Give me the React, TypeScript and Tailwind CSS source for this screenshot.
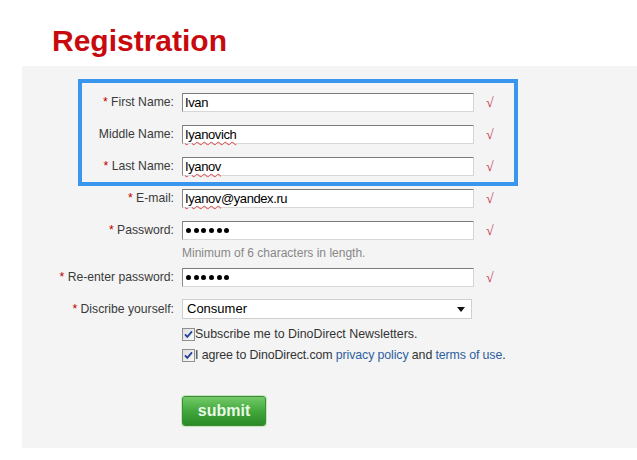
import React from "react";

const Check = () => (
  <span className="ml-[12px] text-[14px] leading-none text-[#c4374c]" style={{ fontFamily: '"Liberation Serif", "DejaVu Serif", serif' }}>
    √
  </span>
);

const Star = () => <span className="text-[#c00000]">*</span>;

const Field = ({ children }: { children?: React.ReactNode }) => (
  <div className="ml-[8px] flex h-[19px] w-[292px] items-center border border-t-[#7a7a7a] border-l-[#8a8a8a] border-r-[#d4d4d4] border-b-[#d8d8d8] bg-white pl-[2px] text-[13px] tracking-[-0.4px] text-black">
    {children}
  </div>
);

const Spell = ({ children }: { children: React.ReactNode }) => (
  <span className="underline decoration-wavy decoration-[#e04040] decoration-1 underline-offset-[2px]">{children}</span>
);

const Dots = () => (
  <div className="flex items-center gap-[2.7px] pl-[1px]">
    {[0, 1, 2, 3, 4, 5].map((i) => (
      <span key={i} className="h-[5px] w-[5px] rounded-full bg-black" />
    ))}
  </div>
);

const Row = ({ label, w, children, check = true }: { label: React.ReactNode; w: string; children: React.ReactNode; check?: boolean }) => (
  <div className="flex h-[19px] items-center">
    <div className={`flex justify-end whitespace-nowrap text-[12.2px] text-[#3a3a3a] ${w}`}>{label}</div>
    {children}
    {check && <Check />}
  </div>
);

const Box = () => (
  <svg width="13" height="13" viewBox="0 0 13 13" className="shrink-0">
    <defs>
      <linearGradient id="cbg" x1="0" y1="0" x2="1" y2="1">
        <stop offset="0" stopColor="#dcdcdc" />
        <stop offset="1" stopColor="#fbfbfb" />
      </linearGradient>
    </defs>
    <rect x="0.5" y="0.5" width="12" height="12" fill="url(#cbg)" stroke="#8e8f8f" />
    <path d="M3 6.3 L5.3 8.8 L10 3.4" fill="none" stroke="#21419a" strokeWidth="1.8" />
  </svg>
);

export default function App() {
  return (
    <div className="min-h-[460px] w-[637px] bg-white" style={{ fontFamily: '"Liberation Sans", Arial, sans-serif' }}>
      <h1 className="pl-[52px] pt-[26px] text-[30px] font-bold leading-[30px] text-[#c80a0e]">Registration</h1>
      <div className="ml-[22px] mt-[10px] bg-[#f4f4f4] pb-[22px] pl-[56px] pt-[13px]">
        <div className="flex w-[440px] flex-col gap-[13px] border-4 border-[#3896ee] pb-[6px] pt-[10px]">
          <Row w="w-[92px]" label={<><Star />&nbsp;First Name:</>}>
            <Field>Ivan</Field>
          </Row>
          <Row w="w-[92px]" label={<>Middle Name:</>}>
            <Field><Spell>Iyanovich</Spell></Field>
          </Row>
          <Row w="w-[92px]" label={<><Star />&nbsp;Last Name:</>}>
            <Field><Spell>Iyanov</Spell></Field>
          </Row>
        </div>
        <div className="mt-[3px] flex flex-col gap-[13px]">
          <Row w="w-[96px]" label={<><Star />&nbsp;E-mail:</>}>
            <Field><Spell>Iyanov</Spell>@yandex.ru</Field>
          </Row>
          <Row w="w-[96px]" label={<><Star />&nbsp;Password:</>}>
            <Field><Dots /></Field>
          </Row>
        </div>
        <div className="ml-[104px] mt-[6px] h-[14px] text-[12px] leading-[14px] text-[#888]">Minimum of 6 characters in length.</div>
        <div className="mt-[8px]">
          <Row w="w-[96px]" label={<><Star />&nbsp;Re-enter password:</>}>
            <Field><Dots /></Field>
          </Row>
        </div>
        <div className="mt-[12px] flex h-[20px] items-center">
          <div className="flex w-[96px] justify-end whitespace-nowrap text-[12.2px] text-[#3a3a3a]"><Star />&nbsp;Discribe yourself:</div>
          <div className="ml-[8px] flex h-[20px] w-[290px] items-center justify-between border border-[#cfcfcf] bg-white pl-[4px] pr-[6px] text-[13px] text-black">
            <span>Consumer</span>
            <svg width="8" height="5" viewBox="0 0 8 5"><path d="M0 0 H8 L4 5 Z" fill="#111" /></svg>
          </div>
        </div>
        <div className="ml-[104px] mt-[5px] flex flex-col text-[12.4px] text-[#333]">
          <div className="flex h-[21px] items-center">
            <Box />
            <span>Subscribe me to DinoDirect Newsletters.</span>
          </div>
          <div className="flex h-[21px] items-center">
            <Box />
            <span className="tracking-[-0.12px]">
              I agree to DinoDirect.com <span className="text-[#2f5f9e]">privacy policy</span> and{" "}
              <span className="text-[#2f5f9e]">terms of use</span>.
            </span>
          </div>
        </div>
        <div className="ml-[104px] mt-[30px]">
          <div className="flex h-[30px] w-[84px] items-center justify-center rounded-[3px] border border-[#3d8c35] bg-gradient-to-b from-[#72ca68] via-[#42a83c] to-[#2a8a26] pb-[1px] text-[16px] font-bold text-[#eaf8e6] shadow-[0_0_0_1px_#c4e6bd]">
            submit
          </div>
        </div>
      </div>
    </div>
  );
}
